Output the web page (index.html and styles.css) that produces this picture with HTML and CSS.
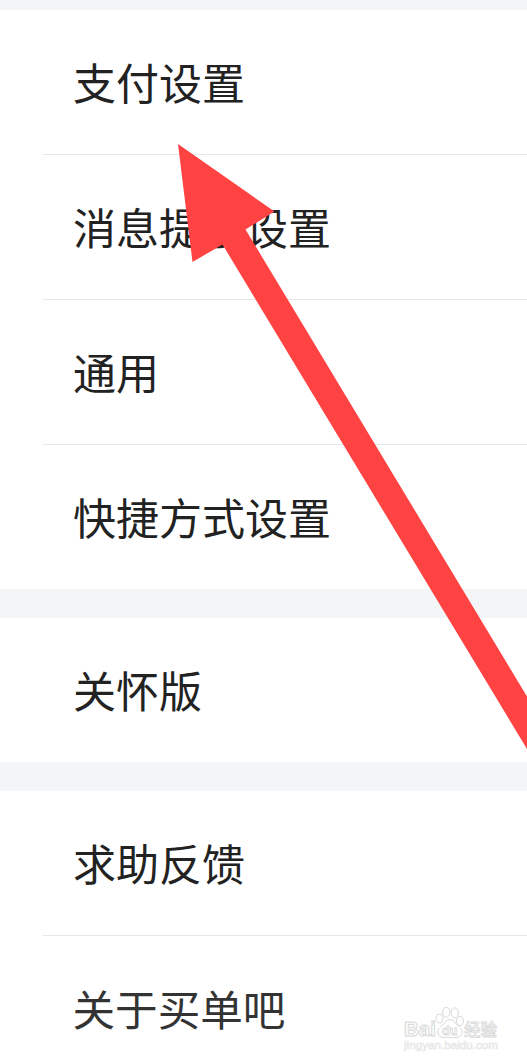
FILE: index.html
```html
<!DOCTYPE html>
<html lang="zh-CN">
<head>
<meta charset="utf-8">
<meta name="viewport" content="width=device-width, initial-scale=1.0">
<title>设置</title>
<link rel="stylesheet" href="styles.css">
</head>
<body>
<div class="page">
  <ul class="group">
    <li class="item">支付设置</li>
    <li class="item">消息提示设置</li>
    <li class="item">通用</li>
    <li class="item">快捷方式设置</li>
  </ul>
  <ul class="group">
    <li class="item">关怀版</li>
  </ul>
  <ul class="group">
    <li class="item">求助反馈</li>
    <li class="item about">关于买单吧</li>
  </ul>

  <!-- arrow pointing at the first row -->
  <svg class="arrow" viewBox="0 0 527 1064">
    <polygon points="178,144 274.5,211.500 245.5,229.500 527,696.5 527,749 222.500,244.500 192.5,262"/>
  </svg>

  <svg class="watermark" viewBox="0 0 110 54">
    <g class="logo">
      <text x="4" y="36" font-size="21" textLength="32" lengthAdjust="spacingAndGlyphs">Bai</text>
      <ellipse cx="39.5" cy="18.500" rx="3.4" ry="4.3"/>
      <ellipse cx="46.3" cy="12.3" rx="3.6" ry="5"/>
      <ellipse cx="54.8" cy="12.800" rx="3.6" ry="5"/>
      <ellipse cx="60" cy="21" rx="3.4" ry="4.5"/>
      <path d="M50 19.500c-4 0-4.500 3-7 5.500c-3.500 3-6 4.500-5 8.500c1.500 5 7 4 12 4s10.500 1 12-4c1-4-1.500-5.500-5-8.500c-2.500-2.500-3-5.500-7-5.500z"/>
      <text class="du" x="42" y="35" font-size="12.500" textLength="15.500">du</text>
      <text class="cn" x="64" y="35.500" font-size="16.500" textLength="33">经验</text>
    </g>
    <text class="url" x="4" y="49" font-size="11" textLength="94" lengthAdjust="spacingAndGlyphs">jingyan.baidu.com</text>
  </svg>
</div>
</body>
</html>
```

FILE: styles.css
```css
body {
  margin: 0;
  background: #f4f5f7;
  font-family: "Noto Sans CJK SC", sans-serif;
}
.page {
  position: relative;
  box-sizing: border-box;
  height: 1064px;
  padding-top: 10px;
  overflow: hidden;
}
.group {
  list-style: none;
  margin: 0 0 29px;
  padding: 0 0 0 43px;
  background: #fff;
}
.group:last-of-type {
  margin-bottom: 0;
}
.item {
  box-sizing: border-box;
  height: 145px;
  padding-left: 30px;
  border-bottom: 1px solid #e8e8e8;
  color: #222;
  font-size: 43px;
  line-height: 143px;
  white-space: nowrap;
}
.item:last-child {
  height: 144px;
  border-bottom: none;
}
.about {
  padding-left: 29.5px;
  color: #333;
  font-size: 42.6px;
}
.arrow {
  position: absolute;
  top: 0;
  left: 0;
  width: 527px;
  height: 1064px;
  fill: #ff4242;
}
.watermark {
  position: absolute;
  top: 1000px;
  left: 400px;
  width: 110px;
  height: 54px;
}
.logo {
  fill: #fff;
  stroke: #d8d8d8;
  stroke-width: 1;
  font-family: "Liberation Sans", sans-serif;
  font-weight: bold;
}
.du {
  stroke-width: .8;
}
.cn {
  font-family: "Noto Sans CJK SC", sans-serif;
  font-weight: 500;
  stroke-width: .8;
}
.url {
  fill: #fafafa;
  stroke: #e6e6e6;
  stroke-width: .6;
  font-family: "Liberation Sans", sans-serif;
}
```
